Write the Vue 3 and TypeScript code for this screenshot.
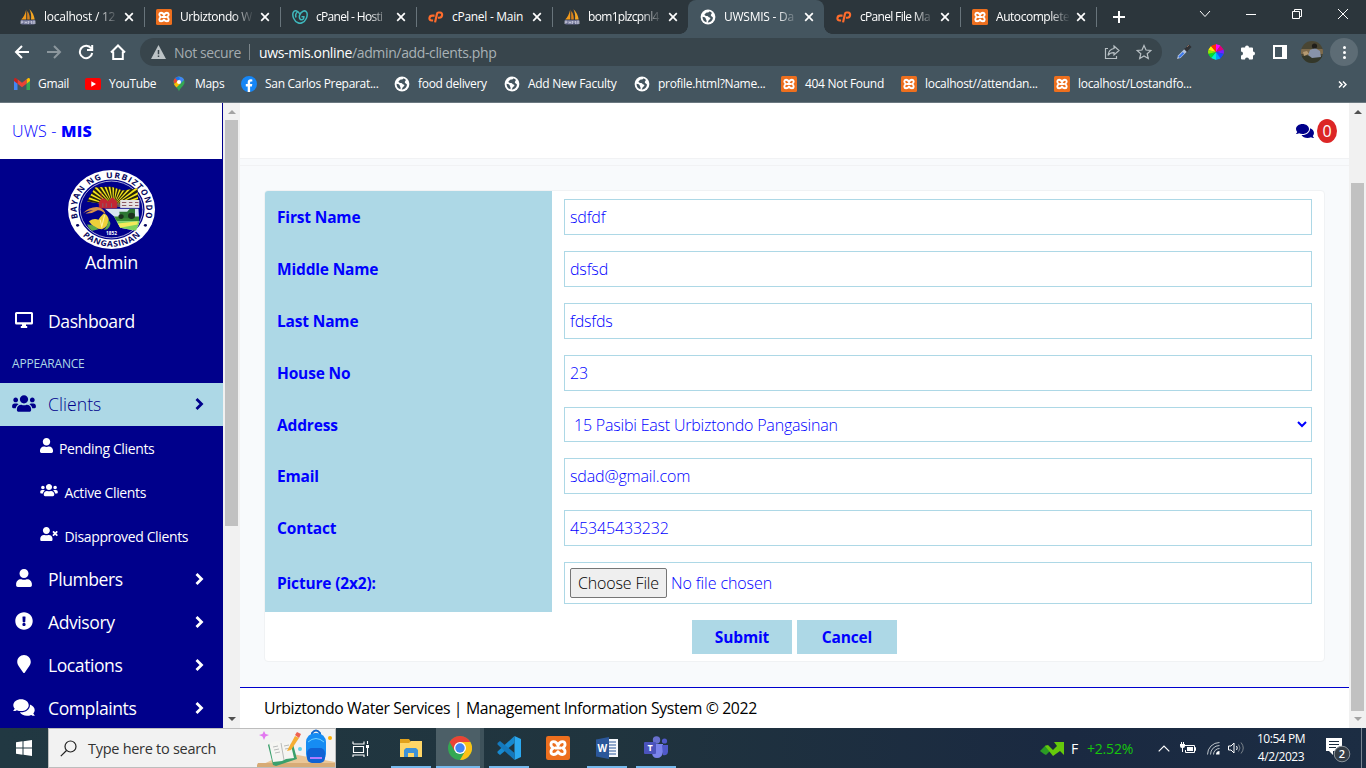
<script setup lang="ts">
interface Tab { title: string; icon: string; tone?: string; active?: boolean; last?: boolean }
interface Bookmark { label: string; icon: string; width: number }
interface NavItem { label: string; icon: string; cls: string }
interface Field { label: string; value: string; kind: 'text' | 'select' | 'file' }

const tabs: Tab[] = [
  { title: 'localhost / 12', icon: 'pma', tone: 'loose' },
  { title: 'Urbiztondo W', icon: 'xampp', tone: 'medium' },
  { title: 'cPanel - Hosti', icon: 'godaddy' },
  { title: 'cPanel - Main', icon: 'cpanel', tone: 'full' },
  { title: 'bom1plzcpnl4', icon: 'pma', last: true },
  { title: 'UWSMIS - Da', icon: 'globe', tone: 'loose', active: true },
  { title: 'cPanel File Ma', icon: 'cpanel' },
  { title: 'Autocomplete', icon: 'xampp', tone: 'medium' },
]
const bookmarks: Bookmark[] = [
  { label: 'Gmail', icon: 'gmail', width: 71 },
  { label: 'YouTube', icon: 'youtube', width: 86 },
  { label: 'Maps', icon: 'maps', width: 70 },
  { label: 'San Carlos Preparat...', icon: 'facebook', width: 153 },
  { label: 'food delivery', icon: 'globe', width: 110 },
  { label: 'Add New Faculty', icon: 'globe', width: 130 },
  { label: 'profile.html?Name...', icon: 'globe', width: 147 },
  { label: '404 Not Found', icon: 'xampp', width: 120 },
  { label: 'localhost//attendan...', icon: 'xampp', width: 153 },
  { label: 'localhost/Lostandfo...', icon: 'xampp', width: 150 },
]
const subItems: NavItem[] = [
  { label: 'Pending Clients', icon: 'user', cls: 'narrow' },
  { label: 'Active Clients', icon: 'users', cls: 'wide' },
  { label: 'Disapproved Clients', icon: 'user-x', cls: 'wide' },
]
const lowerItems: NavItem[] = [
  { label: 'Plumbers', icon: 'user', cls: '' },
  { label: 'Advisory', icon: 'alert', cls: '' },
  { label: 'Locations', icon: 'marker', cls: '' },
  { label: 'Complaints', icon: 'comments', cls: 'big' },
]
const fields: Field[] = [
  { label: 'First Name', value: 'sdfdf', kind: 'text' },
  { label: 'Middle Name', value: 'dsfsd', kind: 'text' },
  { label: 'Last Name', value: 'fdsfds', kind: 'text' },
  { label: 'House No', value: '23', kind: 'text' },
  { label: 'Address', value: '15 Pasibi East Urbiztondo Pangasinan', kind: 'select' },
  { label: 'Email', value: 'sdad@gmail.com', kind: 'text' },
  { label: 'Contact', value: '45345433232', kind: 'text' },
  { label: 'Picture (2x2):', value: 'No file chosen', kind: 'file' },
]
const rays: number[] = Array.from({ length: 19 }, (_, i) => -90 + i * 10)
</script>

<template>
  <div class="screen">
    <svg class="defs" width="0" height="0" aria-hidden="true">
      <symbol id="user" viewBox="0 0 448 512"><path fill="currentColor" d="M224 256c70.7 0 128-57.3 128-128S294.7 0 224 0 96 57.3 96 128s57.3 128 128 128zm89.6 32h-16.7c-22.2 10.2-46.9 16-72.9 16s-50.6-5.8-72.9-16h-16.7C60.2 288 0 348.2 0 422.4V464c0 26.5 21.5 48 48 48h352c26.5 0 48-21.5 48-48v-41.6c0-74.2-60.2-134.4-134.4-134.4z" /></symbol>
      <symbol id="users" viewBox="0 0 640 512"><path fill="currentColor" d="M96 224c35.3 0 64-28.7 64-64s-28.7-64-64-64-64 28.7-64 64 28.7 64 64 64zm448 0c35.3 0 64-28.7 64-64s-28.7-64-64-64-64 28.7-64 64 28.7 64 64 64zm32 32h-64c-17.6 0-33.5 7.1-45.1 18.6 40.3 22.1 68.9 62 75.1 109.4h66c17.7 0 32-14.3 32-32v-32c0-35.3-28.7-64-64-64zm-256 0c61.9 0 112-50.1 112-112S381.9 32 320 32 208 82.1 208 144s50.1 112 112 112zm76.8 32h-8.3c-20.8 10-43.9 16-68.5 16s-47.6-6-68.5-16h-8.3C179.6 288 128 339.6 128 403.2V432c0 26.5 21.5 48 48 48h288c26.5 0 48-21.5 48-48v-28.8c0-63.6-51.6-115.2-115.2-115.2zm-223.7-13.4C161.5 263.1 145.6 256 128 256H64c-35.3 0-64 28.7-64 64v32c0 17.7 14.3 32 32 32h65.9c6.3-47.4 34.9-87.3 75.2-109.4z" /></symbol>
      <symbol id="user-x" viewBox="0 0 640 512"><path fill="currentColor" d="M224 256c70.7 0 128-57.3 128-128S294.7 0 224 0 96 57.3 96 128s57.3 128 128 128zm89.6 32h-16.7c-22.2 10.2-46.9 16-72.9 16s-50.6-5.8-72.9-16h-16.7C60.2 288 0 348.2 0 422.4V464c0 26.5 21.5 48 48 48h352c26.5 0 48-21.5 48-48v-41.6c0-74.2-60.2-134.4-134.4-134.4zM589.6 240l45.6-45.6c6.3-6.3 6.3-16.5 0-22.8l-22.8-22.8c-6.3-6.3-16.5-6.3-22.8 0L544 194.4l-45.6-45.6c-6.3-6.3-16.5-6.3-22.8 0l-22.8 22.8c-6.3 6.3-6.3 16.5 0 22.8l45.6 45.6-45.6 45.6c-6.3 6.3-6.3 16.5 0 22.8l22.8 22.8c6.3 6.3 16.5 6.3 22.8 0l45.6-45.6 45.6 45.6c6.3 6.3 16.5 6.3 22.8 0l22.8-22.8c6.3-6.3 6.3-16.5 0-22.8L589.6 240z" /></symbol>
      <symbol id="comments" viewBox="0 0 576 512"><path fill="currentColor" d="M416 192c0-88.4-93.1-160-208-160S0 103.6 0 192c0 34.3 14.1 65.9 38 92-13.4 30.2-35.5 54.2-35.8 54.5-2.2 2.3-2.8 5.7-1.5 8.7S4.8 352 8 352c36.6 0 66.9-12.3 88.7-25 32.2 15.7 70.3 25 111.3 25 114.9 0 208-71.6 208-160zm122 220c23.9-26 38-57.7 38-92 0-66.9-53.5-124.2-129.3-148.1.9 6.6 1.3 13.3 1.3 20.1 0 105.9-107.7 192-240 192-10.8 0-21.3-.8-31.7-1.9C207.8 439.6 281.8 480 368 480c41 0 79.1-9.2 111.3-25 21.8 12.7 52.1 25 88.7 25 3.2 0 6.1-1.9 7.3-4.8 1.3-2.9.7-6.3-1.5-8.7-.3-.3-22.4-24.2-35.8-54.5z" /></symbol>
      <symbol id="alert" viewBox="0 0 512 512"><path fill="currentColor" d="M504 256c0 137-111 248-248 248S8 393 8 256C8 119 119 8 256 8s248 111 248 248zm-248 50c-25.4 0-46 20.6-46 46s20.6 46 46 46 46-20.6 46-46-20.6-46-46-46zm-43.7-165.3l7.4 136c.3 6.3 5.6 11.3 12 11.3h48.5c6.4 0 11.7-5 12-11.3l7.4-136c.4-6.9-5.1-12.7-12-12.7h-63.4c-6.8 0-12.3 5.8-11.9 12.7z" /></symbol>
      <symbol id="marker" viewBox="0 0 384 512"><path fill="currentColor" d="M172.3 501.7C27 291 0 269.4 0 192 0 86 86 0 192 0s192 86 192 192c0 77.4-27 99-172.3 309.7-9.5 13.7-29.9 13.7-39.4 0z" /></symbol>
      <symbol id="desktop" viewBox="0 0 18 16"><path fill="currentColor" fill-rule="evenodd" d="M1.5 0h15A1.5 1.5 0 0 1 18 1.5v9.5a1.5 1.5 0 0 1-1.5 1.5H11v1.5h1.2V16H5.8v-2H7v-1.5H1.5A1.5 1.5 0 0 1 0 11V1.5A1.5 1.5 0 0 1 1.5 0zM2 2v8.2h14V2z" /></symbol>
      <symbol id="chevron" viewBox="0 0 8 12"><path fill="none" stroke="currentColor" stroke-width="2.8" d="M1 1l5 5-5 5" /></symbol>
      <symbol id="close" viewBox="0 0 10 10"><path fill="none" stroke="currentColor" stroke-width="1.7" d="M1.2 1.2l7.6 7.6M8.8 1.2L1.2 8.8" /></symbol>

      <symbol id="xampp" viewBox="0 0 16 16">
        <rect width="16" height="16" rx="1.5" fill="#ed6f1e" />
        <path d="M8 6.3C7.2 4 6.3 3.7 5 3.7c-2 0-2.5 3 0 4.3-2.5 1.3-2 4.3 0 4.3 1.3 0 2.2-.3 3-1.8.8 1.5 1.7 1.800 3 1.800 2 0 2.500-3 0-4.300 2.500-1.300 2-4.300 0-4.300-1.300 0-2.200.3-3 2.600zM5.800 8h4.400" fill="none" stroke="#fff" stroke-width="1.9" stroke-linejoin="round" />
      </symbol>
      <symbol id="pma" viewBox="0 0 16 16">
        <path d="M6.2 .5v10H1.2C3.5 8.5 5.2 5 6.2 .5z" fill="#f29a1c" /><path d="M7.2 2c2 2 2.7 5.5 2.6 8.5H7.2z" fill="#d9821a" /><path d="M9.5 .3c3 2.5 4.7 6.5 5.2 10.2H11c.5-3 .1-6.5-1.5-10.2z" fill="#f5a623" />
        <path d="M.5 11h15l-1 4.5H1.5z" fill="#686d8f" /><path d="M1 15v-2.8h2v1.5H1M5 12v3m0-1.5h2V12m0 1.5V15m1.5 0v-3l1.5 1.5 1.5-1.5v3m1.5 0v-2.8h2V15m-2-1h2" fill="none" stroke="#d8d9ea" stroke-width=".7" />
      </symbol>
      <symbol id="cpanel" viewBox="0 0 17 12">
        <path d="M7 4.5H4.5C1 4.5.2 9.7 4 9.7h1.4M7.5 11.7l2-9c.2-1 .7-1.5 1.7-1.5h1.6c3.4 0 2.7 5.6-.8 5.6h-1.5" fill="none" stroke="#ff6c2c" stroke-width="2.3" />
      </symbol>
      <symbol id="godaddy" viewBox="0 0 16 16">
        <g fill="none" stroke="#3fb8bd" stroke-width="1.5"><path d="M8 5.5C6.5 2 2.8.6 1.3 3.3-.2 6.8 2 12 6 13.8c1.3.6 2.7.6 4 0 4-1.8 6.2-7 4.7-10.5C13.2.6 8.8 2 7.5 6.5 7 9 8 10.8 9.5 10.8c1.5 0 2.5-1.3 2.4-3H9.5" /><path d="M4 8.5C3.2 6 4 4 5.5 3" /></g>
      </symbol>
      <symbol id="globe" viewBox="0 0 16 16">
        <circle cx="8" cy="8" r="7.4" fill="#fff" />
        <path d="M9.5 2.2c-.3 1-1.3 1.3-2.5 1.3-1.3 0-1.3 1.2-2.4 1.7-.5 1.3 1 1.7 2.6 1.8 1.2 0 1.1 1.6 2.4 1.6 1.1.2 1 1.6 0 2-1 .4-1 1.6-1.9 2.8 3 .3 5-1.9 5.3-4.7C12.500 7.500 11 7.700 10.800 6.300 10.700 5 12.300 5 11.600 3.400zM2.500 7.700c1.500 0 3.300.7 3.300 2 0 1 .8 1 .8 2.300l-.2 1.300C4 12.700 2.500 10.500 2.500 7.700z" fill="#44555f" />
      </symbol>
      <symbol id="gmail" viewBox="0 0 16 12">
        <path d="M0 1.5V12h3.5V5z" fill="#4285f4" /><path d="M16 1.5V12h-3.5V5z" fill="#34a853" /><path d="M12.5 1.2L14 .2c1-.5 2 .2 2 1.3v1.6l-3.5 2.7z" fill="#fbbc04" /><path d="M3.5 1.2L8 4.7l4.5-3.5v4.6L8 9.2 3.5 5.8z" fill="#ea4335" /><path d="M3.5 1.2L2 .2C1-.3 0 .4 0 1.5v1.6l3.5 2.7z" fill="#c5221f" />
      </symbol>
      <symbol id="youtube" viewBox="0 0 16 12"><rect width="16" height="12" rx="2" fill="#f00" /><path d="M6.3 3.3v5.4L11 6z" fill="#fff" /></symbol>
      <symbol id="maps" viewBox="0 0 12 16">
        <clipPath id="pin"><path d="M6 .5A5.5 5.5 0 0 0 .5 6c0 4 4.5 5.5 5.5 9.5 1-4 5.5-5.5 5.5-9.5A5.5 5.5 0 0 0 6 .5z" /></clipPath>
        <g clip-path="url(#pin)"><path d="M0 0h12v16H0z" fill="#34a853" /><path d="M0 9l5-5 3 3-6 6z" fill="#fbbc04" /><path d="M0 0h5l1.5 2L2 7.5 0 6z" fill="#ea4335" /><path d="M4 0h8v3L7 8 5 5l1-3z" fill="#4285f4" /><path d="M4 0l3 2-2 3-3-3z" fill="#1a73e8" /></g><circle cx="6" cy="6" r="2" fill="#fff" />
      </symbol>
      <symbol id="facebook" viewBox="0 0 16 16"><circle cx="8" cy="8" r="8" fill="#1686f5" /><path d="M6.7 16v-5.5H4.8V8h1.9V6.5C6.7 4.4 7.8 3.3 9.8 3.3l1.5.1v2h-1c-.9 0-1.2.5-1.2 1.2V8h2.2l-.4 2.5H9.1V16z" fill="#fff" /></symbol>
    </svg>

    <header class="browser">
      <div class="tabstrip">
        <div v-for="(t, i) in tabs" :key="i" class="tab" :class="{ active: t.active, last: t.last }">
          <svg class="fav" :class="t.icon"><use :href="'#' + t.icon" /></svg>
          <span class="tab-title" :class="t.tone">{{ t.title }}</span>
          <svg class="x"><use href="#close" /></svg>
        </div>
        <svg class="plus" viewBox="0 0 12 12"><path d="M6 0v12M0 6h12" stroke="#fff" stroke-width="2" /></svg>
        <div class="win">
          <svg width="12" height="12" viewBox="0 0 12 12"><path d="M1 3l5 5.5L11 3" /></svg>
          <svg width="12" height="12" viewBox="0 0 12 12"><path d="M1 6.5h10" /></svg>
          <svg width="12" height="12" viewBox="0 0 12 12"><path d="M1.5 3.5h7v7h-7zM3.5 3V1.5h7v7H9" /></svg>
          <svg width="12" height="12" viewBox="0 0 12 12"><path d="M1 1l10 10M11 1L1 11" /></svg>
        </div>
      </div>

      <div class="toolbar">
        <svg class="tb" viewBox="0 0 16 16"><path d="M15 8H2M8 2L2 8l6 6" /></svg>
        <svg class="tb dim" viewBox="0 0 16 16"><path d="M1 8h13M8 2l6 6-6 6" /></svg>
        <svg class="tb" viewBox="0 0 16 16"><path d="M13.2 4.5A6.2 6.2 0 1 0 14.2 9M14.2 1v5H9" /></svg>
        <svg class="tb" viewBox="0 0 16 16"><path d="M1 8.5L8 1.5l7 7M3.2 7.5V15h9.6V7.5" /></svg>
        <div class="omnibox">
          <svg width="15" height="14" viewBox="0 0 15 14"><path d="M7.5 0L15 14H0z" fill="#bcc3c6" /><path d="M7.5 5v4.3M7.5 10.5v1.6" stroke="#3a464c" stroke-width="1.5" /></svg>
          <span class="insecure">Not secure</span><i class="bar"></i>
          <span class="url">uws-mis.online<em>/admin/add-clients.php</em></span>
          <svg class="share" viewBox="0 0 16 16"><path d="M4 4.5H1.5v10h11V12M10 2l5 4.5-5 4.5V8.7c-3 0-4.8.8-6 2.6.4-3.3 2.3-6.3 6-6.8z" /></svg>
          <svg class="star" viewBox="0 0 16 16"><path d="M8 1.5l2 4.5 4.9.5-3.7 3.2 1.1 4.8L8 12l-4.3 2.5 1.1-4.8L1.1 6.5 6 6z" /></svg>
        </div>
        <svg class="ext" viewBox="0 0 16 16"><path d="M1 15l1-3.5L8.5 5l2.5 2.5L4.5 14z" fill="#b4c3dc" /><path d="M3 13.2L7.5 8.7" stroke="#3978ed" stroke-width="2" /><path d="M8.500 4.500l3 3M9.500 5L13 1.500l1.500 1.500L11 6.500z" fill="#303236" stroke="#303236" stroke-width="1.5" /><path d="M11 3l2-2" stroke="#8a6a5a" /></svg>
        <svg class="ext wheel" viewBox="0 0 16 16">
          <path d="M8 8V0l4.5 1.5z" fill="#f0f" /><path d="M8 8l4.5-6.5L16 6z" fill="#e0007a" /><path d="M8 8l8-2.5V10z" fill="#7a1cff" /><path d="M8 8l8 2-4 5z" fill="#1947ff" /><path d="M8 8l4.5 6.5L8 16z" fill="#00a2ff" /><path d="M8 8v8l-5-2z" fill="#00f0d0" /><path d="M8 8l-5 6-3-4z" fill="#00e02b" /><path d="M8 8L0 10V6z" fill="#8eed00" /><path d="M8 8L0 6l3-4z" fill="#ffec00" /><path d="M8 8L3 2l5-2z" fill="#ff3000" />
        </svg>
        <svg class="ext" viewBox="0 0 16 16"><path d="M5 3.5a2 2 0 0 1 4 0h3a1 1 0 0 1 1 1v3a2 2 0 0 1 0 4v3a1 1 0 0 1-1 1H9a2 2 0 0 0-4 0H2a1 1 0 0 1-1-1v-3a2 2 0 0 0 0-4v-3a1 1 0 0 1 1-1z" fill="#fff" /></svg>
        <svg class="ext" viewBox="0 0 16 16"><path d="M1 1h14v14H1zM3 3v10h7V3z" fill="#fff" fill-rule="evenodd" /></svg>
        <svg class="avatar" viewBox="0 0 22 22"><clipPath id="av"><circle cx="11" cy="11" r="11" /></clipPath><g clip-path="url(#av)"><path d="M0 0h22v22H0z" fill="#4a4633" /><path d="M0 8h22v5H0z" fill="#7d6a4c" /><path d="M0 15h22v7H0z" fill="#33372a" /><path d="M9 9l5-2 5 3 1 6-9 1-4-3z" fill="#8793a9" /><circle cx="13.5" cy="5" r="2.6" fill="#201e1a" /><path d="M2 11l4-1 2 3-5 2z" fill="#b59a72" /></g></svg>
        <div class="kebab"><i></i><i></i><i></i></div>
      </div>

      <div class="bookmarks">
        <div v-for="b in bookmarks" :key="b.label" class="bm" :style="{ width: b.width + 'px' }">
          <svg class="fav" :class="b.icon"><use :href="'#' + b.icon" /></svg><span>{{ b.label }}</span>
        </div>
        <svg class="more" viewBox="0 0 9 7"><path d="M1 .5l3 3-3 3M5 .5l3 3-3 3" /></svg>
      </div>
    </header>

    <div class="page">
      <aside class="sidebar">
        <div class="brand">UWS - <b>MIS</b></div>
        <div class="profile">
          <svg class="seal" viewBox="0 0 100 100" preserveAspectRatio="none">
            <defs>
              <path id="arcTop" d="M11.8 62A40 40 0 1 1 88.2 62" /><path id="arcBottom" d="M14 80.2A47 47 0 0 0 86 80.2" />
              <clipPath id="land"><path d="M22 40l9-18 18-1 14 5 17-3 1 26 1 18-4 10-18-4-7-14-18-17z" /></clipPath>
            </defs>
            <circle cx="50" cy="50" r="50" fill="#fff" /><circle cx="50" cy="50" r="38" fill="#00008b" /><circle cx="50" cy="50" r="36" fill="none" stroke="#fff" stroke-width=".8" />
            <g clip-path="url(#land)"><path d="M20 15h64v27H20z" fill="#24220d" /><path v-for="r in rays" :key="r" d="M52 46l-1.7-42h3.4z" fill="#f5e51b" :transform="`rotate(${r} 52 46)`" /><path d="M30 49h54v30H30z" fill="#d9e8f0" /><path d="M45 59h40v6H45z" fill="#3c8e35" /><path d="M45 65h40v15H45z" fill="#7ed35c" /><path d="M55 68l25-3v4l-20 4z" fill="#f4e95b" /></g>
            <path d="M36 48v-8l5-4 5 4 5-5 5 5v8zM38 29v10" fill="#c22534" stroke="#c22534" /><path d="M60 38h22v10H60z" fill="#e5e3e4" /><path d="M62 41h5m3 0h4m3 0h4M62 45h5m3 0h4m3 0h4M40 42v5m4-5v5m6-5v5" stroke="#8e5a64" stroke-width="1.3" /><path d="M59 53h9l3-4h6v8l-5 4H60z" fill="#2d7733" /><circle cx="61" cy="59" r="3" fill="#1b321d" /><circle cx="73" cy="58" r="4" fill="#1b321d" />
            <path d="M17 55q8-9 18-8 8 3 8 9-5-6-9-5-7 5-14 4 5-3 9-4-7 0-12 4z" fill="#d8904b" />
            <path d="M24 65q6-5 11-2 2-4 6-8 5 1 6 9-1 8-8 11-9 0-15-10z" fill="#eed03a" /><path d="M22 69q8 0 13 6l-7 2q-4-2-6-8zM46 63q6 5-1 12l-4 1q5-5 5-13z" fill="#5faa4c" /><path d="M37 63l2 10M42 57l-3 14" stroke="#fff0a0" stroke-width="1.2" />
            <text x="50" y="82.5" text-anchor="middle" fill="#fff" font-size="5.5" font-weight="700">1852</text>
            <g class="motto"><text><textPath href="#arcTop" startOffset="1" textLength="147">BAYAN NG URBIZTONDO</textPath></text><text><textPath href="#arcBottom" startOffset="4" textLength="74">PANGASINAN</textPath></text></g>
            <circle cx="11" cy="70" r="1.8" fill="#07075e" /><circle cx="89" cy="70" r="1.8" fill="#07075e" />
          </svg>
          <span>Admin</span>
        </div>
        <nav>
          <div class="nav"><svg class="ni desk"><use href="#desktop" /></svg><span>Dashboard</span></div>
          <div class="caption">APPEARANCE</div>
          <div class="nav current"><svg class="ni clients"><use href="#users" /></svg><span>Clients</span><svg class="chev"><use href="#chevron" /></svg></div>
          <div v-for="s in subItems" :key="s.label" class="sub"><svg :class="s.cls"><use :href="'#' + s.icon" /></svg><span>{{ s.label }}</span></div>
          <div v-for="n in lowerItems" :key="n.label" class="nav"><svg class="ni" :class="n.cls"><use :href="'#' + n.icon" /></svg><span>{{ n.label }}</span><svg class="chev"><use href="#chevron" /></svg></div>
        </nav>
      </aside>
      <div class="scroll side"><i class="up"></i><b></b><i class="down"></i></div>

      <main>
        <div class="topbar"><svg><use href="#comments" /></svg><span class="badge">0</span></div>
        <div class="strip"></div>
        <section class="content">
          <form class="card" @submit.prevent>
            <div v-for="f in fields" :key="f.label" class="row" :class="f.kind">
              <label>{{ f.label }}</label>
              <div class="cell">
                <div class="input">
                  <span v-if="f.kind === 'file'" class="choose">Choose File</span>
                  <span class="value">{{ f.value }}</span>
                  <svg v-if="f.kind === 'select'" class="caret" viewBox="0 0 10 7"><path d="M1 1l4 4 4-4" /></svg>
                </div>
              </div>
            </div>
            <div class="actions"><button>Submit</button><button>Cancel</button></div>
          </form>
        </section>
        <footer>Urbiztondo Water Services | Management Information System © 2022</footer>
      </main>
      <div class="scroll main-scroll"><i class="up"></i><b></b><i class="down"></i></div>
    </div>

    <div class="taskbar">
      <div class="start"><svg width="16" height="16" viewBox="0 0 16 16"><path d="M0 2.2l6.5-.9v6.2H0zM7.5 1.2L16 0v7.5H7.5zM0 8.5h6.5v6.2L0 13.8zM7.5 8.5H16V16l-8.5-1.2z" fill="#fff" /></svg></div>
      <div class="search">
        <svg class="lens" viewBox="0 0 17 17"><circle cx="10.5" cy="6.5" r="5.5" /><path d="M6.5 10.5L.8 16.2" /></svg><span>Type here to search</span>
        <svg class="art" viewBox="0 0 78 38">
          <path d="M0 38l30-14 48 9v5z" fill="#eac697" /><path d="M0 36l1-2h77v4H0z" fill="#d7ab76" />
          <path d="M11 16l2-2 23 1 4 15-21 7-3-1z" fill="#3aa06c" /><path d="M12 14l9-2 4 2 8-2 4 17-8 1-4 2-9 1z" fill="#f5f5f2" /><path d="M24 14l3 17M16 18l5-1m-4 4l5-1m-4 4l5-1m4-6l5-1m-4 4l5-1" stroke="#b9bbba" />
          <path d="M31 20L38 7l4 2-8 12-4 1z" fill="#f5ae33" /><path d="M38 6l2-3 4 2-2 4z" fill="#ef6250" />
          <path d="M7 2l1.5 3L12 6 8.5 7.5 7 11 5.5 7.5 2 6l3.5-1z" fill="#e278f0" /><circle cx="73" cy="9" r="2" fill="#ffb000" /><circle cx="43" cy="20" r="2" fill="#62d4e8" />
          <path d="M55 6V4q4-5 8 0v2" fill="none" stroke="#1268cd" stroke-width="2" /><rect x="49" y="4" width="20" height="30" rx="9" fill="#168cf3" /><path d="M51 13q8-7 16 0" stroke="#70d2ff" fill="none" /><rect x="50" y="19" width="18" height="15" rx="5" fill="#1062d4" /><path d="M53 29h12" stroke="#b17bff" stroke-width="2" />
        </svg>
      </div>
      <div class="app taskview"><svg width="17" height="17" viewBox="0 0 17 17"><path d="M1 4V1.5M1 4h11V1.5M1.5 6.5h10v6h-10zM1 17v-2h11v2M15.5 1v3M15.5 8v8" fill="none" stroke="#fff" stroke-width="1.1" /><path d="M14 5h3v3h-3z" fill="#fff" /></svg></div>
      <div class="app run explorer"><svg width="22" height="20" viewBox="0 0 22 20"><path d="M0 1h9l2 3h11v15H0z" fill="#e2a21c" /><path d="M0 5h9l2-2h11v16H0z" fill="#ffd667" /><path d="M4 19v-7l2-2h10l2 2v7h-4v-4H8v4z" fill="#3d91d7" /></svg></div>
      <div class="app run chrome"><svg width="24" height="24" viewBox="0 0 24 24"><circle cx="12" cy="12" r="12" fill="#34a853" /><path d="M12 6h10.4A12 12 0 0 1 12 24l5.2-9z" fill="#fbc116" /><path d="M1.6 6l5.2 9L12 12V6h10.4a12 12 0 0 0-20.8 0z" fill="#ea4335" /><circle cx="12" cy="12" r="6" fill="#fff" /><circle cx="12" cy="12" r="4.7" fill="#4285f4" /></svg></div>
      <div class="app run code"><svg width="24" height="24" viewBox="0 0 24 24"><path d="M17.5 0L24 3v18l-6.5 3z" fill="#2ba9f0" /><path d="M17.5 0v7L3 19 .5 17v-1.5z" fill="#1789cf" /><path d="M.5 7L3 5l14.5 12v7L.5 8.5z" fill="#1479bd" /></svg></div>
      <div class="app xa"><svg width="24" height="24"><use href="#xampp" /></svg></div>
      <div class="app run word"><svg width="22" height="22" viewBox="0 0 22 22"><path d="M11 2h11v18H11z" fill="#f5f8fc" /><path d="M13 5h7m-7 3h7m-7 3h7m-7 3h7m-7 3h7" stroke="#2b579a" stroke-width="1.2" /><path d="M0 2.5L13 0v22L0 19.5z" fill="#2b579a" /><text x="6.3" y="15" text-anchor="middle" fill="#fff" font-size="10" font-weight="700">W</text></svg></div>
      <div class="app run teams"><svg width="24" height="24" viewBox="0 0 24 24"><circle cx="12.5" cy="4" r="3.7" fill="#6870cf" /><circle cx="20.5" cy="5" r="2.6" fill="#5059c9" /><path d="M8 8h11v8q-1 6-6 6t-5-6z" fill="#7b83eb" /><path d="M18 9h6v7q-1 4-5 3z" fill="#5059c9" /><rect y="6" width="12" height="12" rx="1" fill="#4b53bc" /><text x="6" y="15.2" text-anchor="middle" fill="#fff" font-size="9" font-weight="700">T</text></svg></div>
      <div class="tray">
        <svg class="trend" viewBox="0 0 24 15"><path d="M0 10l6-6 5 5-5 5-2-1z" fill="#2b9b24" /><path d="M5 5l3-1 5 5 4-4-3-4h10v13l-4-4-7 5z" fill="#65c90b" /></svg><span class="f">F</span><span class="gain">+2.52%</span>
        <svg class="up-arrow" viewBox="0 0 12 7"><path d="M.7 6.3L6 1l5.3 5.3" /></svg>
        <svg class="battery" viewBox="0 0 16 12"><path d="M5 3.5h9.5v7h-9V8M14.5 5.5h1v3h-1" fill="none" stroke="#fff" /><path d="M7 5h6v4H7zM0 2h5v2q0 2-2 2v4H2V6Q0 6 0 4z" fill="#fff" /><path d="M1.5 0v2m2-2v2" stroke="#fff" /></svg>
        <svg class="wifi" viewBox="0 0 13 13"><path d="M.5 12.5A12 12 0 0 1 12.5 .5M3.5 12.5a9 9 0 0 1 9-9M6.5 12.5a6 6 0 0 1 6-6" fill="none" stroke="#bec5ca" /><path d="M9 12.5a3.5 3.5 0 0 1 3.5-3.5v3.5z" fill="#fff" /></svg>
        <svg class="vol" viewBox="0 0 17 14"><path d="M.5 5h2.5L6 2v10L3 9H.5zM8.5 5q1.5 2 0 4" fill="none" stroke="#fff" /><path d="M10.5 3.5q3 3.5 0 7M13 1.5q4.500 5.500 0 11" fill="none" stroke="#7c858d" /></svg>
        <div class="clock"><span>10:54 PM</span><span>4/2/2023</span></div>
        <svg class="notice" viewBox="0 0 25 25"><path d="M0 0h16v13H7v4l-4-4H0z" fill="#fff" /><path d="M3 3.5h10M3 6.5h10M3 9.5h7" stroke="#1b2b3d" /><circle cx="16" cy="16" r="7.8" fill="#343d46" stroke="#8c949b" /><text x="16" y="20" text-anchor="middle" font-size="11" font-weight="600" fill="#fff">2</text></svg>
        <i class="edge"></i>
      </div>
    </div>
  </div>
</template>

<style>
html, body { margin: 0; overflow: hidden; }
</style>
<style scoped>
* { box-sizing: border-box; }
.screen { width: 1366px; height: 768px; overflow: hidden; font-family: "Open Sans", "Noto Sans", sans-serif; display: flex; flex-direction: column; }
.screen svg { flex: none; display: block; }
.defs { position: absolute; }
.browser { height: 103px; flex: none; background: #44555f; border-bottom: 1px solid #6b7880; color: #fff; font-size: 12px; letter-spacing: -.3px; }
.tabstrip { height: 34px; background: #2c363c; display: flex; align-items: center; padding-left: 8px; }
.tab { width: 136px; height: 34px; padding: 0 10px 0 12px; display: flex; align-items: center; position: relative; flex: none; }
.tab::after { content: ""; position: absolute; right: -1px; top: 7px; width: 1px; height: 20px; background: #68747b; }
.tab.last::after { display: none; }
.tab.active { background: #44555f; border-radius: 8px 8px 0 0; }
.tab.active::before, .tab.active::after { content: ""; position: absolute; top: auto; bottom: 0; width: 8px; height: 8px; }
.tab.active::before { left: -8px; background: radial-gradient(circle at 0 0, #2c363c 7.5px, #44555f 8px); }
.tab.active::after { right: -8px; background: radial-gradient(circle at 100% 0, #2c363c 7.5px, #44555f 8px); }
.fav { width: 16px; height: 16px; }
.fav.cpanel { height: 12px; }
.fav.gmail, .fav.youtube { height: 12px; width: 16px; }
.tab-title { width: 74px; margin-left: 8px; white-space: nowrap; line-height: 18px; letter-spacing: -.68px; -webkit-mask-image: linear-gradient(90deg, #000 72%, transparent 100%); mask-image: linear-gradient(90deg, #000 72%, transparent 100%); }
.tab-title.loose { letter-spacing: -.25px; }
.tab-title.medium { letter-spacing: -.45px; }
.tab-title.full { -webkit-mask-image: none; mask-image: none; letter-spacing: -.28px; }
.x { width: 10px; height: 10px; margin-left: 6px; }
.plus { width: 12px; height: 12px; margin-left: 17px; }
.win { margin-left: auto; display: flex; gap: 34px; padding-right: 17px; margin-top: -6px; }
.win path { fill: none; stroke: #fff; stroke-width: 1; }
.toolbar { height: 36px; padding: 0 8px 0 14px; display: flex; align-items: center; }
.tb { width: 16px; height: 16px; margin-right: 16px; }
.tb path { fill: none; stroke: #fff; stroke-width: 2; }
.tb.dim path { stroke: #8c979d; }
.omnibox { width: 1022px; height: 28px; margin-left: -2px; border-radius: 14px; background: #38454c; display: flex; align-items: center; padding: 0 10px 0 11px; font-size: 14px; letter-spacing: 0; }
.insecure { color: #a4acb0; margin-left: 8px; width: 67px; white-space: nowrap; letter-spacing: -.4px; }
.bar { width: 1px; height: 16px; background: #7c868b; margin: 0 9px 0 8px; }
.url { white-space: nowrap; letter-spacing: -.36px; }
.url em { font-style: normal; color: #a9b2b6; }
.share { width: 16px; height: 16px; margin-left: auto; }
.star { width: 16px; height: 16px; margin-left: 16px; }
.share path, .star path { fill: none; stroke: #b7bfc3; stroke-width: 1.2; }
.ext { width: 16px; height: 16px; margin-left: 16px; }
.omnibox + .ext { margin-left: 14px; }
.wheel { border-radius: 50%; }
.avatar { width: 22px; height: 22px; margin-left: 13px; }
.kebab { width: 28px; height: 28px; margin-left: 7px; border-radius: 50%; background: #5d6c75; display: flex; flex-direction: column; align-items: center; justify-content: center; gap: 2px; }
.kebab i { width: 3px; height: 3px; background: #fff; border-radius: 50%; }
.bookmarks { height: 28px; display: flex; align-items: center; padding: 0 19px 0 14px; }
.bm { display: flex; align-items: center; white-space: nowrap; flex: none; }
.bm span { margin-left: 8px; margin-top: -1px; }
.more { width: 9px; height: 7px; margin-left: auto; }
.more path { fill: none; stroke: #fff; stroke-width: 1.5; }

.page { height: 625px; flex: none; display: flex; }
.sidebar { width: 223px; flex: none; height: 625px; overflow: hidden; background: #00008b; color: #fff; }
.brand { width: 222px; height: 56px; background: #fff; color: #00f; font-size: 16px; font-weight: 300; line-height: 56px; padding-left: 12px; letter-spacing: .15px; }
.brand b { font-weight: 800; letter-spacing: .35px; }
.profile { height: 140px; display: flex; flex-direction: column; align-items: center; padding-top: 11px; font-size: 18px; }
.seal { width: 87px; height: 79px; }
.motto { fill: #07075e; font-size: 10px; font-weight: 700; }
.profile span { line-height: 26px; letter-spacing: -.35px; }
.nav { height: 43px; display: flex; align-items: center; padding: 0 19px 0 12px; font-size: 17.6px; letter-spacing: -.45px; }
.nav span { margin-left: 12px; margin-top: -1px; }
.nav:first-child { height: 44px; }
.ni { width: 24px; height: 18px; margin-top: -3px; }
.ni.desk { height: 16px; margin-top: -2px; }
.ni.big { height: 19px; }
.ni.clients { height: 19px; margin-top: -2px; }
.current { background: #add8e6; color: #00008b; font-weight: 300; letter-spacing: .05px; }
.chev { width: 9px; height: 12px; margin-left: auto; margin-top: -2px; }
.current .chev { margin-top: -1px; }
.caption { height: 40px; line-height: 41px; padding-left: 12px; color: #add8e6; font-size: 12px; letter-spacing: -.2px; }
.sub { height: 44px; display: flex; align-items: center; padding-left: 40px; font-size: 14px; letter-spacing: -.36px; }
.sub svg { height: 14px; margin-top: -5px; }
.sub svg.narrow { width: 13px; height: 15px; margin-right: 6px; }
.sub svg.wide { width: 18px; margin-right: 6.5px; }
.scroll { width: 17px; flex: none; background: #f1f1f1; display: flex; flex-direction: column; align-items: center; }
.scroll b { width: 13px; background: #c1c1c1; }
.scroll i { width: 0; height: 0; border: 4px solid transparent; }
.scroll .up { border-top: 0; border-bottom-color: #505050; }
.scroll .down { border-bottom: 0; border-top-color: #505050; margin: auto 0 7px; }
.side .up { margin: 7px 0 6px; border-bottom-color: #a3a3a3; }
.side b { height: 406px; }
.main-scroll .up { margin: 7px 0 69px; }
.main-scroll b { height: 528px; }
.main-scroll .down { border-top-color: #a3a3a3; }
main { width: 1109px; flex: none; background: #f8fafc; display: flex; flex-direction: column; }
.topbar { height: 55px; background: #fff; display: flex; align-items: center; justify-content: flex-end; padding-right: 12px; }
.topbar svg { width: 18px; height: 16px; color: #00008b; margin-right: 3px; }
.badge { width: 20px; height: 24px; border-radius: 50%; background: #dc2626; color: #fff; font-size: 16px; line-height: 24px; text-align: center; }
.strip { height: 8px; border: 1px solid #f1f2f4; border-width: 1px 0; }
.content { padding: 24px 24px 25px 24px; height: 521px; }
.card { width: 1061px; height: 472px; border: 1px solid #f0f2f4; border-radius: 4px; background: #fff; overflow: hidden; color: #00f; font-size: 16px; }
.row { height: 52px; display: flex; }
.row.select { height: 51px; }
.row.file { height: 58px; }
.row label { width: 287px; background: #add8e6; padding-left: 12px; font-size: 15.5px; font-weight: 700; display: flex; align-items: center; letter-spacing: -.17px; }
.cell { flex: 1; padding: 8px 12px; }
.input { height: 100%; border: 1px solid #add8e6; padding: 0 5px; display: flex; align-items: center; font-weight: 300; letter-spacing: -.15px; }
.select .input { padding: 0 4px 0 9px; letter-spacing: -.2px; }
.caret { width: 10px; height: 7px; margin-left: auto; }
.caret path { fill: none; stroke: #00f; stroke-width: 2; }
.choose { width: 97px; height: 30px; border: 1px solid #767676; border-radius: 2px; background: #efefef; color: #000; line-height: 28px; text-align: center; margin-right: 4px; white-space: nowrap; }
.file .value { letter-spacing: -.08px; }
.actions { display: flex; justify-content: center; gap: 5px; padding-top: 8px; }
.actions button { width: 100px; height: 34px; border: 0; padding: 0; background: #add8e6; color: #00f; font: 700 15.5px "Open Sans", "Noto Sans", sans-serif; letter-spacing: -.15px; }
footer { height: 41px; border-top: 1px solid #0000cd; background: #fff; padding-left: 24px; line-height: 41px; font-size: 15.8px; letter-spacing: -.37px; color: #000; white-space: nowrap; }

.taskbar { height: 40px; flex: none; display: flex; background: linear-gradient(90deg, #213842, #20343e 45%, #1a2941 78%, #1c2d43); color: #fff; }
.start { width: 48px; display: flex; align-items: center; justify-content: center; }
.search { width: 288px; border: 1px solid #bdbdbd; background: #f2f2f2; display: flex; align-items: center; color: #333; font-size: 14.5px; letter-spacing: -.28px; padding-left: 11px; flex: none; }
.lens { width: 17px; height: 17px; }
.lens circle, .lens path { fill: none; stroke: #222; stroke-width: 1.2; }
.search span { margin-left: 11px; white-space: nowrap; }
.art { width: 78px; height: 38px; margin-left: auto; }
.app { width: 49px; display: flex; align-items: center; justify-content: center; position: relative; flex: none; }
.taskview { width: 48px; }
.explorer { margin-left: 2px; }
.run::after { content: ""; position: absolute; left: 5px; right: 4px; bottom: 0; height: 2px; background: #76b9ed; }
.chrome { width: 48px; margin-left: 1px; padding-left: 4px; background: #4c5f67; border-right: 4px solid #3e525b; }
.chrome::after { left: 0; right: 0; }
.tray { margin-left: auto; display: flex; align-items: center; }
.trend { width: 24px; height: 15px; }
.f { margin-left: 7px; width: 16px; font-size: 14px; }
.gain { color: #16c60c; font-size: 14px; width: 71px; letter-spacing: -.2px; }
.up-arrow { width: 12px; height: 7px; }
.up-arrow path { fill: none; stroke: #fff; stroke-width: 1.2; }
.battery { width: 16px; height: 12px; margin-left: 10px; }
.wifi { width: 13px; height: 13px; margin-left: 11px; }
.vol { width: 17px; height: 14px; margin-left: 8px; }
.clock { width: 50px; margin-left: 11px; display: flex; flex-direction: column; align-items: center; font-size: 12px; line-height: 18px; letter-spacing: -.45px; white-space: nowrap; }
.notice { width: 25px; height: 25px; margin: 5px 10px 0 20px; }
.edge { width: 1px; height: 40px; background: #798592; margin-right: 4px; }
</style>
